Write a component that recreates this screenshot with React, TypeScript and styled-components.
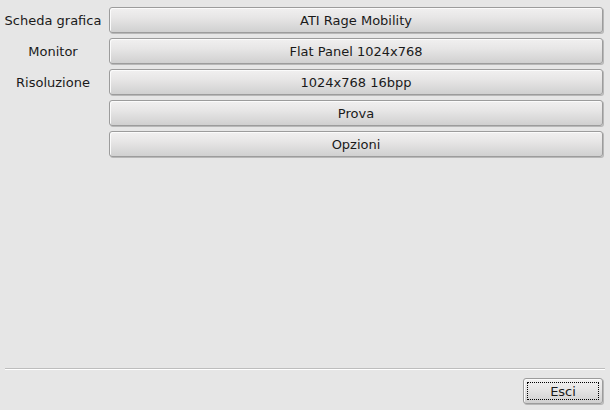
import React from 'react';
import styled, { createGlobalStyle } from 'styled-components';

const GlobalStyle = createGlobalStyle`
  html, body {
    margin: 0;
    padding: 0;
    background: #e6e6e6;
  }
  body {
    font-family: "DejaVu Sans", "Liberation Sans", sans-serif;
    font-size: 13px;
    color: #1a1a1a;
  }
`;

const Window = styled.div`
  width: 610px;
  height: 410px;
  display: flex;
  flex-direction: column;
  background: #e6e6e6;
  box-sizing: border-box;
`;

const Form = styled.div`
  display: grid;
  grid-template-columns: 106px 1fr;
  column-gap: 3px;
  row-gap: 5px;
  padding: 7px 7px 0 0;
  flex: 1;
  align-content: start;
`;

const Label = styled.div`
  display: flex;
  align-items: center;
  justify-content: center;
  height: 26px;
  white-space: nowrap;
`;

const Button = styled.button<{ $focused?: boolean }>`
  height: 26px;
  width: 100%;
  box-sizing: border-box;
  border: 1px solid #9c9c9c;
  border-radius: 3px;
  background: linear-gradient(#f1f0f0 0%, #e7e6e6 40%, #d0d0d0 100%);
  box-shadow: inset 1px 1px 0 #fbfbfb, 1px 1px 0 #b8b8b8;
  font-family: "DejaVu Sans", "Liberation Sans", sans-serif;
  font-size: 13px;
  color: #1a1a1a;
  padding: 0;
  position: relative;
  cursor: default;
`;

const FocusRing = styled.span`
  position: absolute;
  inset: 3px;
  border: 1px dotted #000;
`;

const Footer = styled.div`
  padding: 0 5px 6px 5px;
  display: flex;
  flex-direction: column;
`;

const Separator = styled.div`
  height: 1px;
  background: #bdbdbd;
  border-bottom: 1px solid #ffffff;
  margin-bottom: 8px;
`;

const Actions = styled.div`
  display: flex;
  justify-content: flex-end;
  padding-right: 2px;
`;

const SmallButton = styled(Button)`
  width: 80px;
`;

const rows: { label?: string; value: string }[] = [
  { label: 'Scheda grafica', value: 'ATI Rage Mobility' },
  { label: 'Monitor', value: 'Flat Panel 1024x768' },
  { label: 'Risoluzione', value: '1024x768 16bpp' },
  { value: 'Prova' },
  { value: 'Opzioni' },
];

const App: React.FC = () => {
  return (
    <Window>
      <GlobalStyle />
      <Form>
        {rows.map((r) => (
          <React.Fragment key={r.value}>
            <Label>{r.label ?? ''}</Label>
            <Button>{r.value}</Button>
          </React.Fragment>
        ))}
      </Form>
      <Footer>
        <Separator />
        <Actions>
          <SmallButton>
            <FocusRing />
            Esci
          </SmallButton>
        </Actions>
      </Footer>
    </Window>
  );
};

export default App;
